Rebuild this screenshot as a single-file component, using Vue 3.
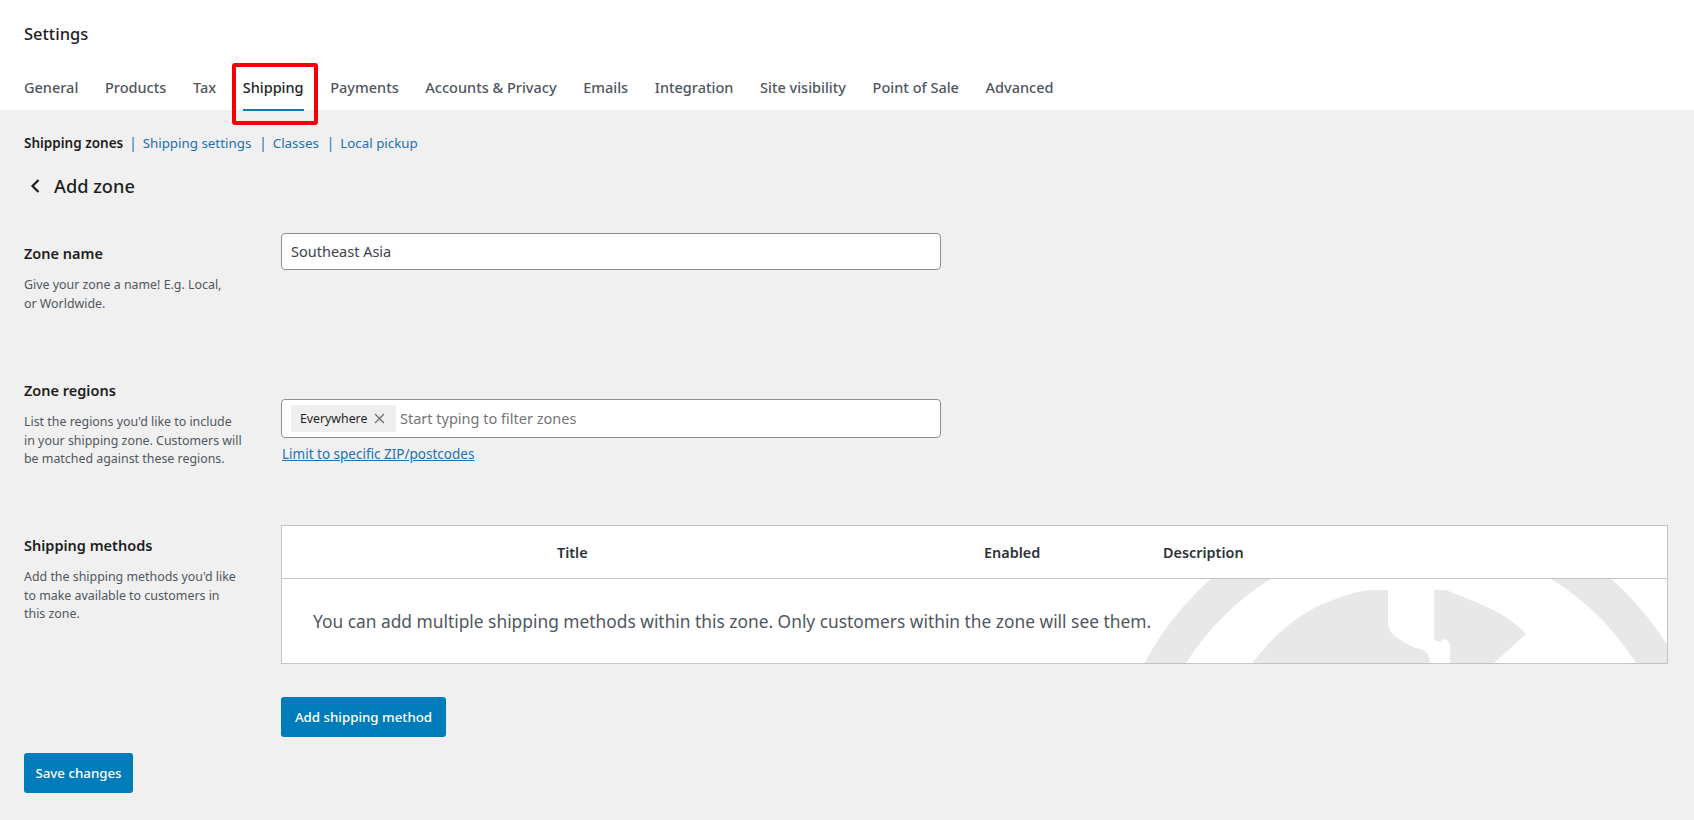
<script setup>
const tabs = ['General','Products','Tax','Shipping','Payments','Accounts & Privacy','Emails','Integration','Site visibility','Point of Sale','Advanced']
const links = ['Shipping settings','Classes','Local pickup']
</script>

<template>
  <div class="page">
    <header class="head">
      <div class="title">Settings</div>
      <nav class="tabs">
        <a v-for="t in tabs" :key="t" class="tab" :class="{ active: t === 'Shipping' }">
          {{ t }}
          <span v-if="t === 'Shipping'" class="marker"></span>
        </a>
      </nav>
    </header>
    <main class="main">
      <div class="subnav">
        <strong class="current">Shipping zones</strong>
        <template v-for="l in links" :key="l">
          <span class="sep">|</span><a class="sublink">{{ l }}</a>
        </template>
      </div>
      <div class="back">
        <svg class="chev" width="12" height="16" viewBox="0 0 12 16"><path d="M9.5 2 L3.5 8 L9.5 14" fill="none" stroke="#1e1e1e" stroke-width="2.2"/></svg>
        <h2 class="addzone">Add zone</h2>
      </div>

      <section class="row row1">
        <div class="left pad">
          <h3 class="label">Zone name</h3>
          <p class="desc">Give your zone a name! E.g. Local,<br>or Worldwide.</p>
        </div>
        <div class="right">
          <div class="input name"><span class="val">Southeast Asia</span></div>
        </div>
      </section>

      <section class="row row2">
        <div class="left">
          <h3 class="label">Zone regions</h3>
          <p class="desc">List the regions you'd like to include<br>in your shipping zone. Customers will<br>be matched against these regions.</p>
        </div>
        <div class="right padr">
          <div class="input regions">
            <span class="chip">Everywhere
              <svg class="x" width="11" height="11" viewBox="0 0 11 11"><path d="M1 1 L10 10 M10 1 L1 10" stroke="#6b6b6b" stroke-width="1.2"/></svg>
            </span>
            <span class="val ph">Start typing to filter zones</span>
          </div>
          <a class="limit">Limit to specific ZIP/postcodes</a>
        </div>
      </section>

      <section class="row row3">
        <div class="left pad">
          <h3 class="label">Shipping methods</h3>
          <p class="desc">Add the shipping methods you'd like<br>to make available to customers in<br>this zone.</p>
        </div>
        <div class="right">
          <div class="table">
            <div class="thead">
              <span class="th th-title">Title</span>
              <span class="th th-enabled">Enabled</span>
              <span class="th">Description</span>
            </div>
            <div class="tbody">
              <svg class="mark" width="1385" height="84" viewBox="282 579 1385 84">
                <circle cx="1411" cy="805" r="284" fill="none" stroke="#e8e8e8" stroke-width="36"/>
                <path fill="#e8e8e8" d="M1252 664 C1275 632 1300 615 1320 605 C1345 595 1360 590 1374 590 L1388 590 L1388 625 C1390 635 1400 640 1413 647 C1420 650 1430 648 1430 664 Z"/>
                <path fill="#e8e8e8" d="M1434 590 L1446 590 C1485 606 1505 612 1526 634 L1493 664 L1450 664 L1450 645 C1448 638 1443 638 1440 642 L1434 640 Z"/>
              </svg>
              <p class="empty">You can add multiple shipping methods within this zone. Only customers within the zone will see them.</p>
            </div>
          </div>
          <button class="btn add">Add shipping method</button>
        </div>
      </section>

      <button class="btn save">Save changes</button>
    </main>
  </div>
</template>

<style>
html, body { margin: 0; background: #f0f0f0; }
</style>

<style scoped>
.page {
  min-height: 820px;
  background: #f0f0f0;
  font-family: "Noto Sans", "Open Sans", sans-serif;
  color: #1e1e1e;
  overflow: hidden;
}
.head { background: #fff; height: 110px; padding: 23px 0 0 24px; box-sizing: border-box; }
.title { font-size: 16.5px; line-height: 22px; font-weight: 500; color: #1e1e1e; }
.tabs { display: flex; gap: 26.6px; margin-top: 18px; height: 47px; }
.tab {
  position: relative;
  font-size: 14.5px;
  line-height: 22px;
  font-weight: 500;
  color: #50575e;
  padding-top: 13px;
  white-space: nowrap;
}
.tab.active { color: #1e1e1e; }
.marker {
  position: absolute; left: 0; right: 0; bottom: -1px; height: 2px; background: #0e7cab;
}
.tab.active::after {
  content: "";
  position: absolute; left: -11px; right: -14px; top: 0; height: 62px;
  border: 4px solid #f5000a; border-radius: 3px; box-sizing: border-box;
}
.main { padding: 22px 26px 0 24px; }
.subnav { font-size: 13.5px; line-height: 22px; display: flex; white-space: nowrap; }
.current { font-weight: 600; color: #1e1e1e; }
.sep { color: #2271b1; margin: 0 6px; }
.sublink { color: #2271b1; margin-right: 2px; font-size: 13.35px; }
.back { display: flex; align-items: center; margin-top: 19px; height: 26px; }
.chev { margin-left: 5px; }
.addzone { font-size: 18.2px; line-height: 26px; font-weight: 500; margin: 0 0 0 13px; color: #1e1e1e; }

.row { display: grid; grid-template-columns: 257px 1fr; }
.row1 { margin-top: 34px; min-height: 148px; }
.row2 { min-height: 144px; }
.pad { padding-top: 10px; }
.padr { padding-top: 18px; }
.label { font-size: 14.5px; line-height: 20px; font-weight: 600; margin: 0; color: #1e1e1e; }
.desc { font-size: 12.4px; line-height: 18.5px; margin: 13px 0 0; color: #50575e; white-space: nowrap; }
.row2 .label { margin-top: -1px; }

.input {
  box-sizing: border-box; width: 660px; background: #fff;
  border: 1px solid #8c8f94; border-radius: 4px; display: flex; align-items: center;
  font-size: 14.5px; color: #3c434a;
}
.val { margin-bottom: 2px; }
.name { height: 37px; padding-left: 9px; }
.regions { height: 39px; padding-left: 9px; }
.chip {
  display: flex; align-items: center; background: #efefef; height: 27px; width: 105px; box-sizing: border-box;
  padding-left: 9px; font-size: 12.3px; color: #1e1e1e; white-space: nowrap;
}
.x { margin-left: 7px; }
.ph { margin-left: 4px; color: #757575; }
.limit { display: block; margin: 6px 0 0 1px; font-size: 13.5px; line-height: 20px; color: #2271b1; text-decoration: underline; }

.table { box-sizing: border-box; background: #fff; border: 1px solid #c3c4c7; height: 139px; }
.thead {
  height: 52px; border-bottom: 1px solid #c3c4c7; display: flex; align-items: center; padding-left: 275px;
  font-size: 14.4px; font-weight: 600;
}
.th { color: #2c3338; }
.th-title { width: 427px; }
.th-enabled { width: 179px; }
.tbody { position: relative; height: 84px; overflow: hidden; display: flex; align-items: center; }
.mark { position: absolute; left: 0; top: 0; }
.empty { position: relative; margin: 0 0 0 31px; font-size: 17.35px; color: #50575e; white-space: nowrap; }

.btn {
  display: block; border: 0; background: #007cba; color: #fff; height: 40px; border-radius: 3px;
  font-family: inherit; font-size: 13.3px; font-weight: 500; padding: 0;
}
.add { width: 165px; margin-top: 33px; }
.save { width: 109px; margin-top: 16px; }
.row3 { min-height: 212px; }
</style>
